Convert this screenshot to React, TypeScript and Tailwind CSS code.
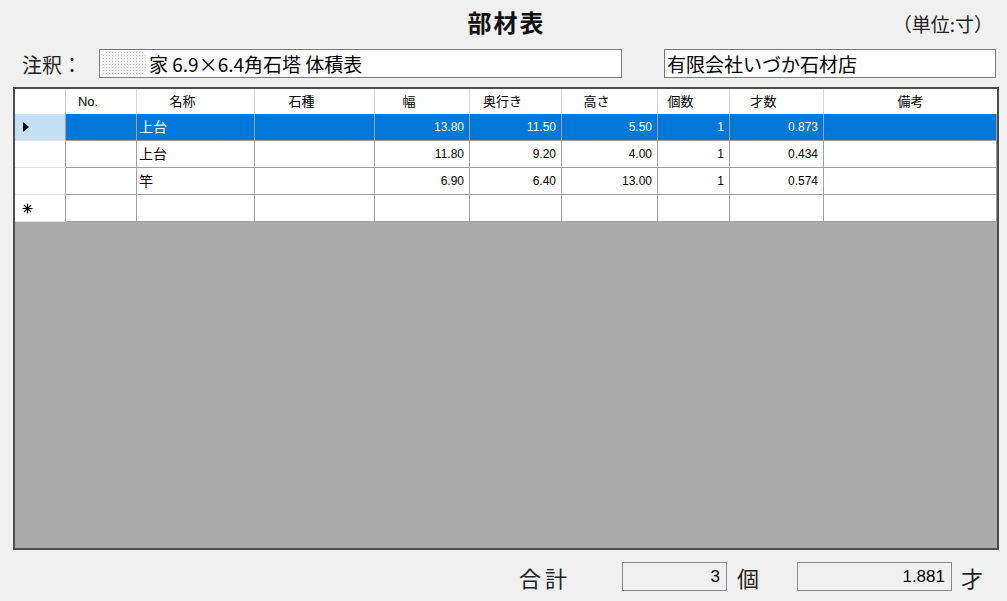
import React from "react";

type Row = {
  name: string;
  w: string;
  d: string;
  h: string;
  qty: string;
  sai: string;
};

const rows: Row[] = [
  { name: "上台", w: "13.80", d: "11.50", h: "5.50", qty: "1", sai: "0.873" },
  { name: "上台", w: "11.80", d: "9.20", h: "4.00", qty: "1", sai: "0.434" },
  { name: "竿", w: "6.90", d: "6.40", h: "13.00", qty: "1", sai: "0.574" },
];

const headers = ["No.", "名称", "石種", "幅", "奥行き", "高さ", "個数", "才数"];

const cols = "grid grid-cols-[51px_71px_118px_120px_95px_92px_96px_72px_94px_173px]";

const TextBox = ({ className, children }: { className: string; children?: React.ReactNode }) => (
  <div
    className={`flex h-[29px] items-center border border-[#7a7a7a] bg-white pl-[2px] text-[19px] leading-none text-black ${className}`}
  >
    {children}
  </div>
);

function DataRow({ row, selected }: { row: Row; selected: boolean }) {
  const cell = selected
    ? "h-[27px] border-r border-b border-[#a0a0a0] bg-[#0078d7] text-white"
    : "h-[27px] border-r border-b border-[#a0a0a0] bg-white text-black";
  const num = `${cell} flex items-center justify-end pr-[5px] text-[12px]`;
  return (
    <div className={cols}>
      <div
        className={`flex h-[27px] items-center border-r border-b border-r-[#a0a0a0] border-b-[#e3e3e3] pl-[8px] ${
          selected ? "bg-[#c4e0f6]" : "bg-white"
        }`}
      >
        {selected && (
          <svg width="6" height="10" viewBox="0 0 6 10">
            <path d="M0 0 L6 5 L0 10 Z" fill="#000" />
          </svg>
        )}
      </div>
      <div className={cell} />
      <div className={`${cell} flex items-center pl-[2px] text-[14px]`}>{row.name}</div>
      <div className={cell} />
      <div className={num}>{row.w}</div>
      <div className={num}>{row.d}</div>
      <div className={num}>{row.h}</div>
      <div className={num}>{row.qty}</div>
      <div className={num}>{row.sai}</div>
      <div className={cell} />
    </div>
  );
}

export default function App() {
  const plain = "h-[27px] border-r border-b border-[#a0a0a0] bg-white";
  return (
    <div className="flex h-[601px] w-[1007px] flex-col overflow-hidden bg-[#f0f0f0] font-['Noto_Sans_CJK_JP',sans-serif] text-black">
      {/* title */}
      <div className="grid h-[46px] grid-cols-[1fr_auto_1fr] items-center">
        <div />
        <div className="-mt-[3px] pl-[6px] text-[24px] font-bold leading-none tracking-[2px] text-[#111]">部材表</div>
        <div className="flex justify-end pr-[14px] text-[19px] leading-none text-[#222]">（単位:寸）</div>
      </div>

      {/* notes */}
      <div className="mt-[3px] flex items-center pl-[22px]">
        <div className="w-[77px] pt-[3px] text-[20px] leading-none text-[#222]">注釈：</div>
        <TextBox className="w-[523px]">
          <div className="mr-[3px] h-[25px] w-[44px] rounded-[6px] bg-[#f3f3f3] bg-[radial-gradient(#b8b8b8_0.8px,transparent_0.9px)] bg-[length:3px_3px]" />
          <span>家 6.9×6.4角石塔 体積表</span>
        </TextBox>
        <TextBox className="ml-[42px] w-[332px]">有限会社いづか石材店</TextBox>
      </div>

      {/* grid */}
      <div className="ml-[13px] mt-[9px] flex h-[463px] w-[986px] flex-col border-2 border-[#4d4d4d] bg-[#ababab] font-['Liberation_Sans','Noto_Sans_CJK_JP',sans-serif]">
        <div className={cols}>
          <div className="h-[25px] border-r border-[#c8c8c8] bg-white" />
          {headers.map((h) => (
            <div
              key={h}
              className="flex h-[25px] items-center justify-center border-r border-[#d6d6d6] bg-white pr-[26px] text-[13px]"
            >
              {h}
            </div>
          ))}
          <div className="flex h-[25px] items-center justify-center bg-white text-[13px]">備考</div>
        </div>
        {rows.map((r, i) => (
          <DataRow key={i} row={r} selected={i === 0} />
        ))}
        <div className={cols}>
          <div className="flex h-[27px] items-center border-r border-b border-r-[#a0a0a0] border-b-[#e3e3e3] bg-white pl-[7px]">
            <svg width="11" height="11" viewBox="0 0 11 11" stroke="#000" strokeWidth="1.2">
              <path d="M5.5 0.5 V10.5 M0.5 5.5 H10.5 M2 2 L9 9 M9 2 L2 9" />
            </svg>
          </div>
          <div className={plain} />
          <div className={plain} />
          <div className={plain} />
          <div className={plain} />
          <div className={plain} />
          <div className={plain} />
          <div className={plain} />
          <div className={plain} />
          <div className={plain} />
        </div>
      </div>

      {/* totals */}
      <div className="mt-[12px] flex items-center justify-end pr-[24px]">
        <div className="mr-[51px] text-[22px] leading-none tracking-[4px] text-[#222]">合計</div>
        <div className="flex h-[29px] w-[105px] items-center justify-end border border-[#8a8a8a] pr-[6px] font-['Liberation_Sans',sans-serif] text-[17px]">
          3
        </div>
        <div className="ml-[10px] mr-[38px] text-[22px] leading-none text-[#222]">個</div>
        <div className="flex h-[29px] w-[155px] items-center justify-end border border-[#8a8a8a] pr-[6px] font-['Liberation_Sans',sans-serif] text-[17px]">
          1.881
        </div>
        <div className="ml-[9px] text-[22px] leading-none text-[#222]">才</div>
      </div>
    </div>
  );
}
